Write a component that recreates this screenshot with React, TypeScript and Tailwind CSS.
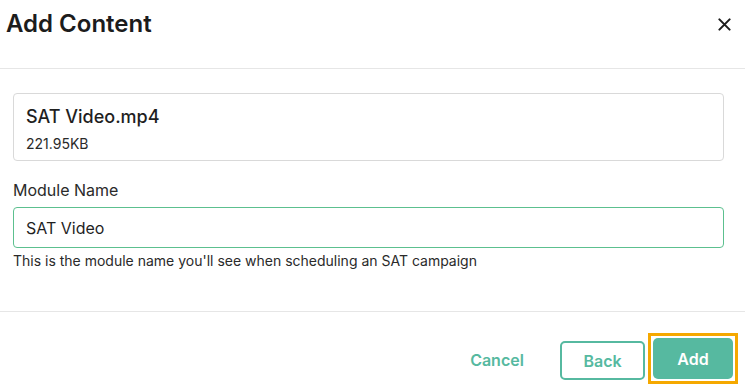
import React from "react";

export default function App() {
  return (
    <div className="w-[745px] h-[390px] bg-white overflow-hidden flex flex-col text-[#1f1f1f]" style={{ fontFamily: "Inter, 'Noto Sans', sans-serif" }}>
      <div className="h-[69px] border-b border-[#e6e6e6] flex items-start justify-between pl-[6px] pr-[11px] pt-[8px]">
        <h1 className="text-[24px] leading-[32px] font-semibold text-[#1c1c1c]">Add Content</h1>
        <button className="mt-[6px] w-[20px] h-[20px] flex items-center justify-center text-[#1c1c1c]">
          <svg width="13" height="13" viewBox="0 0 14 14" fill="none" stroke="currentColor" strokeWidth="2.2" strokeLinecap="round">
            <path d="M1.5 1.5 L12.5 12.5 M12.5 1.5 L1.5 12.5" />
          </svg>
        </button>
      </div>
      <div className="h-[243px] border-b border-[#e6e6e6] pl-[13px] pr-[21px] pt-[24px]">
        <div className="h-[68px] border border-[#d9d9d9] rounded-[4px] px-[12px] pt-[11px]">
          <div className="text-[18px] leading-[24px] font-medium">SAT Video.mp4</div>
          <div className="text-[14px] leading-[18px] mt-[6px] text-[#2a2a2a]">221.95KB</div>
        </div>
        <div className="mt-[18px] text-[16px] leading-[22px] text-[#2a2a2a]">Module Name</div>
        <div className="mt-[6px] h-[41px] border border-[#5cc08f] rounded-[4px] px-[12px] flex items-center text-[16px] text-[#1f1f1f]">SAT Video</div>
        <div className="mt-[3px] text-[14px] leading-[20px] text-[#2a2a2a]">This is the module name you'll see when scheduling an SAT campaign</div>
      </div>
      <div className="flex-1 flex items-start justify-end pr-[7px] pt-[21px]">
        <button className="h-[40px] w-[108px] mt-[7px] text-[16px] font-semibold text-[#56b9a0] flex items-center justify-center mr-[9px]">Cancel</button>
        <button className="h-[39px] w-[85px] mt-[8px] border-2 border-[#56b9a0] rounded-[5px] text-[16px] font-semibold text-[#56b9a0] flex items-center justify-center mr-[3px]">Back</button>
        <div className="border-[3px] border-[#f5a800] p-[2px]">
          <button className="h-[41px] w-[80px] bg-[#56b9a0] rounded-[5px] text-[16px] font-semibold text-white flex items-center justify-center">Add</button>
        </div>
      </div>
    </div>
  );
}
